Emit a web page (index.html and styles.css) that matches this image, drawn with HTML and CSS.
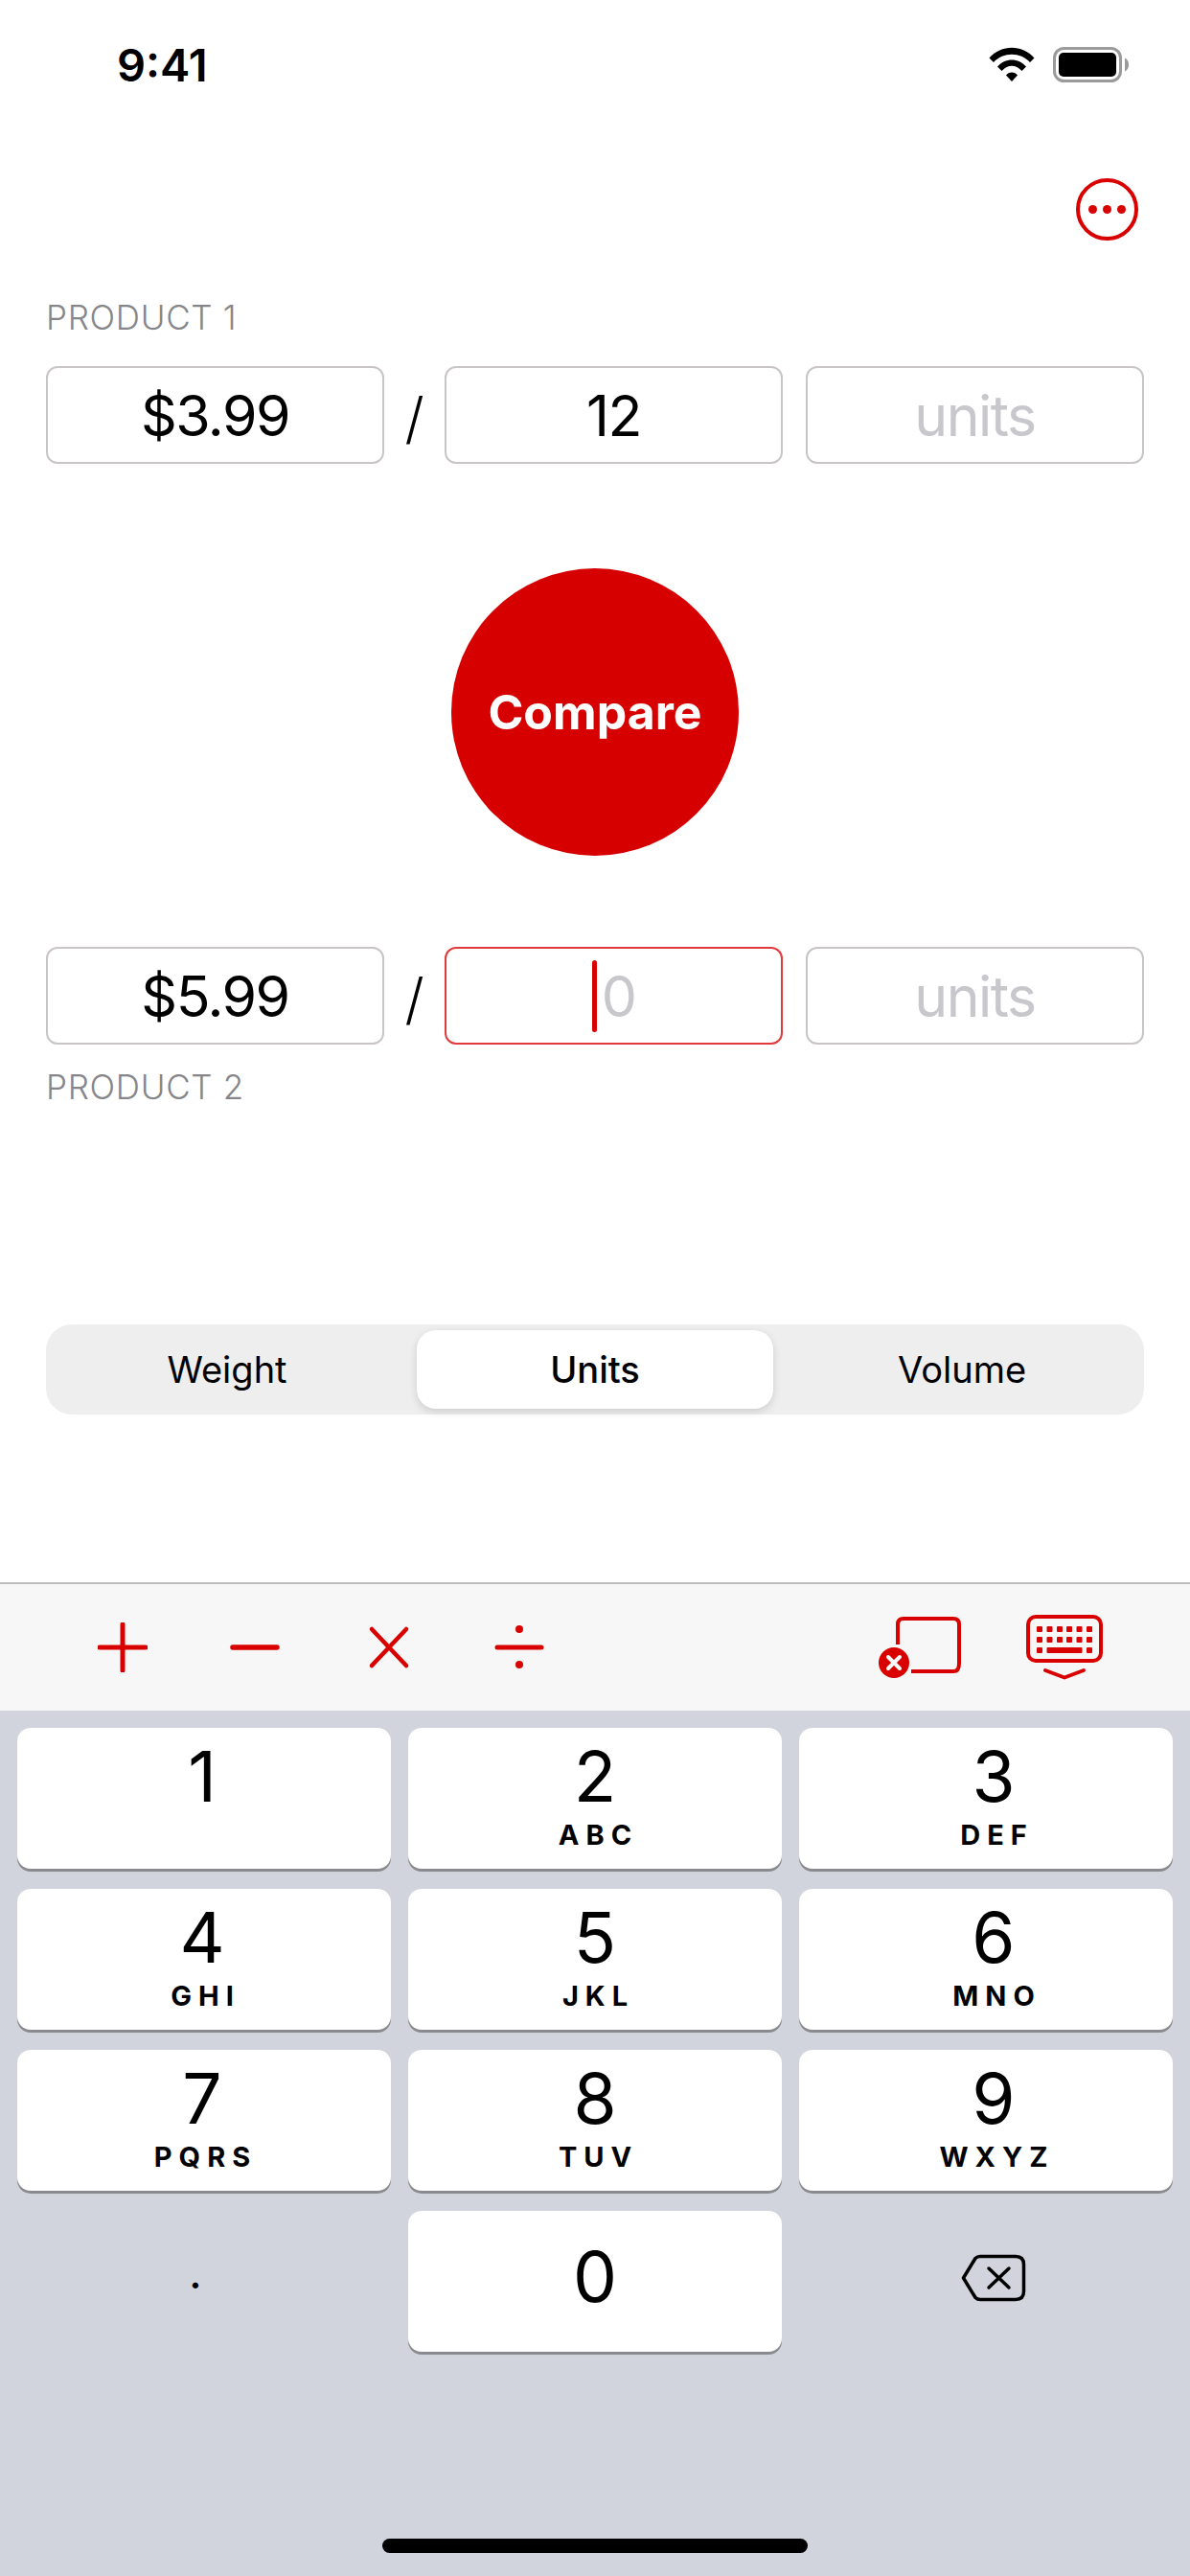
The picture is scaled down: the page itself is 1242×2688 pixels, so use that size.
FILE: index.html
```html
<!DOCTYPE html>
<html lang="en">
<head>
    <meta charset="UTF-8">
    <meta name="viewport" content="width=device-width, initial-scale=1.0">
    <title>Compare</title>
    <link rel="stylesheet" href="styles.css">
</head>
<body>
    <div class="app">
        <div class="status">
            <span class="time">9:41</span>
            <div class="status-icons">
                <svg class="wifi" width="48" height="36" viewBox="0 0 48 36">
                    <path d="M.5 11.5C13-3 35-3 47.5 11.5L43 16C33 5 15 5 5 16Z"/>
                    <path d="M9 20.5C17 11 31 11 39 20.5L34.5 25C28 18 20 18 13.5 25Z"/>
                    <path d="M18 29.5C21 25.5 27 25.5 30 29.5L24 36Z"/>
                </svg>
                <svg class="battery" width="79" height="37" viewBox="0 0 79 37">
                    <rect x="1.5" y="1.5" width="69" height="34" rx="10" fill="none" stroke="#9a9a9a" stroke-width="3"/>
                    <rect x="6" y="6" width="60" height="25" rx="5"/>
                    <path d="M75 11.5C78 13 79 15.500 79 18.500S78 24 75 25.500Z" fill="#9a9a9a"/>
                </svg>
            </div>
        </div>

        <div class="nav">
            <svg width="65" height="65" viewBox="0 0 65 65">
                <circle cx="32.500" cy="32.500" r="30.500" fill="none" stroke="#d90000" stroke-width="4"/>
                <circle cx="17.500" cy="32.500" r="4.500" fill="#d90000"/>
                <circle cx="32.500" cy="32.500" r="4.500" fill="#d90000"/>
                <circle cx="47.500" cy="32.500" r="4.500" fill="#d90000"/>
            </svg>
        </div>

        <div class="label first">PRODUCT 1</div>
        <div class="row">
            <div class="field">$3.99</div>
            <span class="slash">/</span>
            <div class="field">12</div>
            <div class="field empty unit">units</div>
        </div>

        <div class="compare-wrap">
            <button class="compare">Compare</button>
        </div>

        <div class="row">
            <div class="field">$5.99</div>
            <span class="slash">/</span>
            <div class="field active empty"><span class="caret"></span>0</div>
            <div class="field empty unit">units</div>
        </div>
        <div class="label second">PRODUCT 2</div>

        <div class="segment">
            <div class="seg seg-left">Weight</div>
            <div class="seg selected">Units</div>
            <div class="seg seg-right">Volume</div>
        </div>

        <div class="toolbar">
            <div class="ops">
                <svg width="52" height="52" viewBox="0 0 52 52" class="op-icon">
                    <path d="M26 2V50M2 26H50" stroke-width="5"/>
                </svg>
                <svg width="52" height="52" viewBox="0 0 52 52" class="op-icon">
                    <path d="M3 26H49" stroke-width="5.500"/>
                </svg>
                <svg width="52" height="52" viewBox="0 0 52 52" class="op-icon">
                    <path d="M10 7L46 45M46 7L10 45" stroke-width="4.500"/>
                </svg>
                <svg width="52" height="52" viewBox="0 0 52 52" class="op-icon">
                    <path d="M3 26H49" stroke-width="5"/>
                    <circle cx="26" cy="7" r="4" class="dot"/>
                    <circle cx="26" cy="44" r="4" class="dot"/>
                </svg>
            </div>
            <div class="tools">
                <svg width="90" height="66" viewBox="0 0 90 66">
                    <path d="M21 30V9Q21 3 27 3H79Q85 3 85 9V50Q85 58 79 58H35" fill="none" stroke="#d90000" stroke-width="4"/>
                    <circle cx="17" cy="49" r="16" fill="#d90000"/>
                    <path d="M11 43L23 55M23 43L11 55" stroke="#fff" stroke-width="4" stroke-linecap="round"/>
                </svg>
                <svg width="80" height="68" viewBox="0 0 80 68">
                    <rect x="2" y="2" width="76" height="46" rx="8" fill="none" stroke="#d90000" stroke-width="4"/>
                    <g fill="#d90000">
                        <rect x="11" y="12" width="6" height="6" rx="1"/>
                        <rect x="21.500" y="12" width="6" height="6" rx="1"/>
                        <rect x="32" y="12" width="6" height="6" rx="1"/>
                        <rect x="42" y="12" width="6" height="6" rx="1"/>
                        <rect x="52.500" y="12" width="6" height="6" rx="1"/>
                        <rect x="63" y="12" width="6" height="6" rx="1"/>
                        <rect x="11" y="23" width="6" height="6" rx="1"/>
                        <rect x="21.500" y="23" width="6" height="6" rx="1"/>
                        <rect x="32" y="23" width="6" height="6" rx="1"/>
                        <rect x="42" y="23" width="6" height="6" rx="1"/>
                        <rect x="52.500" y="23" width="6" height="6" rx="1"/>
                        <rect x="63" y="23" width="6" height="6" rx="1"/>
                        <rect x="11" y="34" width="6" height="6" rx="1"/>
                        <rect x="21.500" y="34" width="37" height="6" rx="1"/>
                        <rect x="63" y="34" width="6" height="6" rx="1"/>
                    </g>
                    <path d="M20 58L40 65.500L60 58" fill="none" stroke="#d90000" stroke-width="4" stroke-linecap="round" stroke-linejoin="round"/>
                </svg>
            </div>
        </div>

        <div class="keyboard">
            <div class="keys">
                <div class="key"><span class="digit">1</span></div>
                <div class="key"><span class="digit">2</span><span class="letters">ABC</span></div>
                <div class="key"><span class="digit">3</span><span class="letters">DEF</span></div>
                <div class="key"><span class="digit">4</span><span class="letters">GHI</span></div>
                <div class="key"><span class="digit">5</span><span class="letters">JKL</span></div>
                <div class="key"><span class="digit">6</span><span class="letters">MNO</span></div>
                <div class="key"><span class="digit">7</span><span class="letters">PQRS</span></div>
                <div class="key"><span class="digit">8</span><span class="letters">TUV</span></div>
                <div class="key"><span class="digit">9</span><span class="letters">WXYZ</span></div>
                <div class="key blank dot-key">.</div>
                <div class="key zero"><span class="digit">0</span></div>
                <div class="key blank back-key">
                    <svg width="68" height="50" viewBox="0 0 68 50">
                        <path d="M20 2.500H57Q65.500 2.500 65.500 11V39Q65.500 47.500 57 47.500H20Q17 47.500 15 45.500L2.500 25L15 4.500Q17 2.500 20 2.500Z" fill="none" stroke="#000" stroke-width="3.500" stroke-linejoin="round"/>
                        <path d="M29 15L50 35M50 15L29 35" fill="none" stroke="#000" stroke-width="3.500" stroke-linecap="round"/>
                    </svg>
                </div>
            </div>
            <div class="home-bar"></div>
        </div>
    </div>
</body>
</html>
```

FILE: styles.css
```css
*{
    box-sizing: border-box;
}
body{
    margin: 0;
    font-family: Inter, "Liberation Sans", sans-serif;
    color: #000;
    background: #fff;
}
.app{
    width: 1242px;
    height: 2688px;
    display: flex;
    flex-direction: column;
    overflow: hidden;
}
.status{
    height: 134px;
    display: flex;
    align-items: center;
    justify-content: space-between;
    padding: 0 64px 0 122px;
}
.time{
    font-size: 47px;
    font-weight: 600;
}
.status-icons{
    display: flex;
    align-items: center;
    gap: 19px;
}
.nav{
    display: flex;
    justify-content: flex-end;
    padding: 52px 54px 0 0;
}
.nav svg{
    display: block;
}
.label{
    height: 40px;
    line-height: 40px;
    padding-left: 48px;
    font-size: 35px;
    font-weight: 300;
    letter-spacing: 0.7px;
    color: #85858a;
}
.label.first{
    margin-top: 60px;
    margin-bottom: 31px;
}
.label.second{
    margin-top: 24px;
}
.row{
    display: flex;
    padding: 0 48px;
}
.field{
    width: 353px;
    height: 102px;
    border: 2px solid #cac5c5;
    border-radius: 12px;
    display: flex;
    align-items: center;
    justify-content: center;
    font-size: 59px;
    letter-spacing: -1.5px;
}
.field.empty{
    color: #c7c7cc;
}
.field.unit{
    margin-left: 24px;
}
.field.active{
    border-color: #e23a3a;
}
.caret{
    width: 5px;
    height: 75px;
    border-radius: 3px;
    background: #d90000;
    margin-right: 5px;
}
.slash{
    width: 63px;
    text-align: center;
    align-self: center;
    font-size: 58px;
    font-weight: 300;
    padding-top: 6px;
}
.compare-wrap{
    display: flex;
    justify-content: center;
    padding: 109px 0 95px;
}
.compare{
    width: 300px;
    height: 300px;
    border: 0;
    border-radius: 50%;
    background: #d70000;
    color: #fff;
    font-family: inherit;
    font-size: 50px;
    font-weight: 700;
    padding: 0;
}
.segment{
    margin: 228px 48px 0;
    height: 94px;
    padding: 6px;
    border-radius: 27px;
    background: #eeeeee;
    display: grid;
    grid-template-columns: repeat(3, 1fr);
    font-size: 38px;
}
.seg{
    display: flex;
    align-items: center;
    justify-content: center;
}
.seg-left{
    padding-right: 12px;
}
.seg-right{
    padding-left: 10px;
}
.seg.selected{
    margin: 0 3px;
    background: #fff;
    border-radius: 20px;
    font-weight: 500;
    box-shadow: 0 3px 8px rgba(0, 0, 0, 0.14);
}
.toolbar{
    margin-top: auto;
    height: 134px;
    border-top: 2px solid #bdbdbd;
    background: #f7f7f7;
    display: flex;
    align-items: center;
    justify-content: space-between;
    padding: 0 91px 0 102px;
}
.ops{
    display: flex;
    gap: 86px;
    align-items: center;
}
.op-icon{
    fill: none;
    stroke: #d90000;
    stroke-linecap: round;
}
.op-icon .dot{
    fill: #d90000;
    stroke: none;
}
.tools{
    display: flex;
    align-items: center;
    gap: 65px;
}
.tools svg{
    display: block;
}
.keyboard{
    height: 903px;
    background: #d1d4dc;
    padding: 18px 18px 0;
    display: flex;
    flex-direction: column;
}
.keys{
    display: grid;
    grid-template-columns: repeat(3, 390px);
    grid-auto-rows: 147px;
    column-gap: 18px;
    row-gap: 21px;
}
.key{
    background: #fff;
    border-radius: 14px;
    box-shadow: 0 3px 0 #898a8e;
    display: flex;
    flex-direction: column;
    align-items: center;
    padding-top: 14px;
}
.key:nth-child(3n+1){
    padding-right: 4px;
}
.key:nth-child(3n){
    padding-left: 16px;
}
.key.zero{
    padding-top: 32px;
}
.key.blank{
    background: none;
    box-shadow: none;
}
.digit{
    font-size: 73px;
    line-height: 73px;
}
.letters{
    margin-top: 10px;
    font-size: 29px;
    line-height: 29px;
    font-weight: 700;
    letter-spacing: 7px;
    padding-left: 7px;
}
.key.dot-key{
    font-size: 48px;
    line-height: 48px;
    padding: 40px 18px 0 0;
}
.key.back-key{
    padding: 45px 0 0 16px;
}
.home-bar{
    margin: 195px auto 0;
    width: 444px;
    height: 15px;
    border-radius: 8px;
    background: #000;
}
```
